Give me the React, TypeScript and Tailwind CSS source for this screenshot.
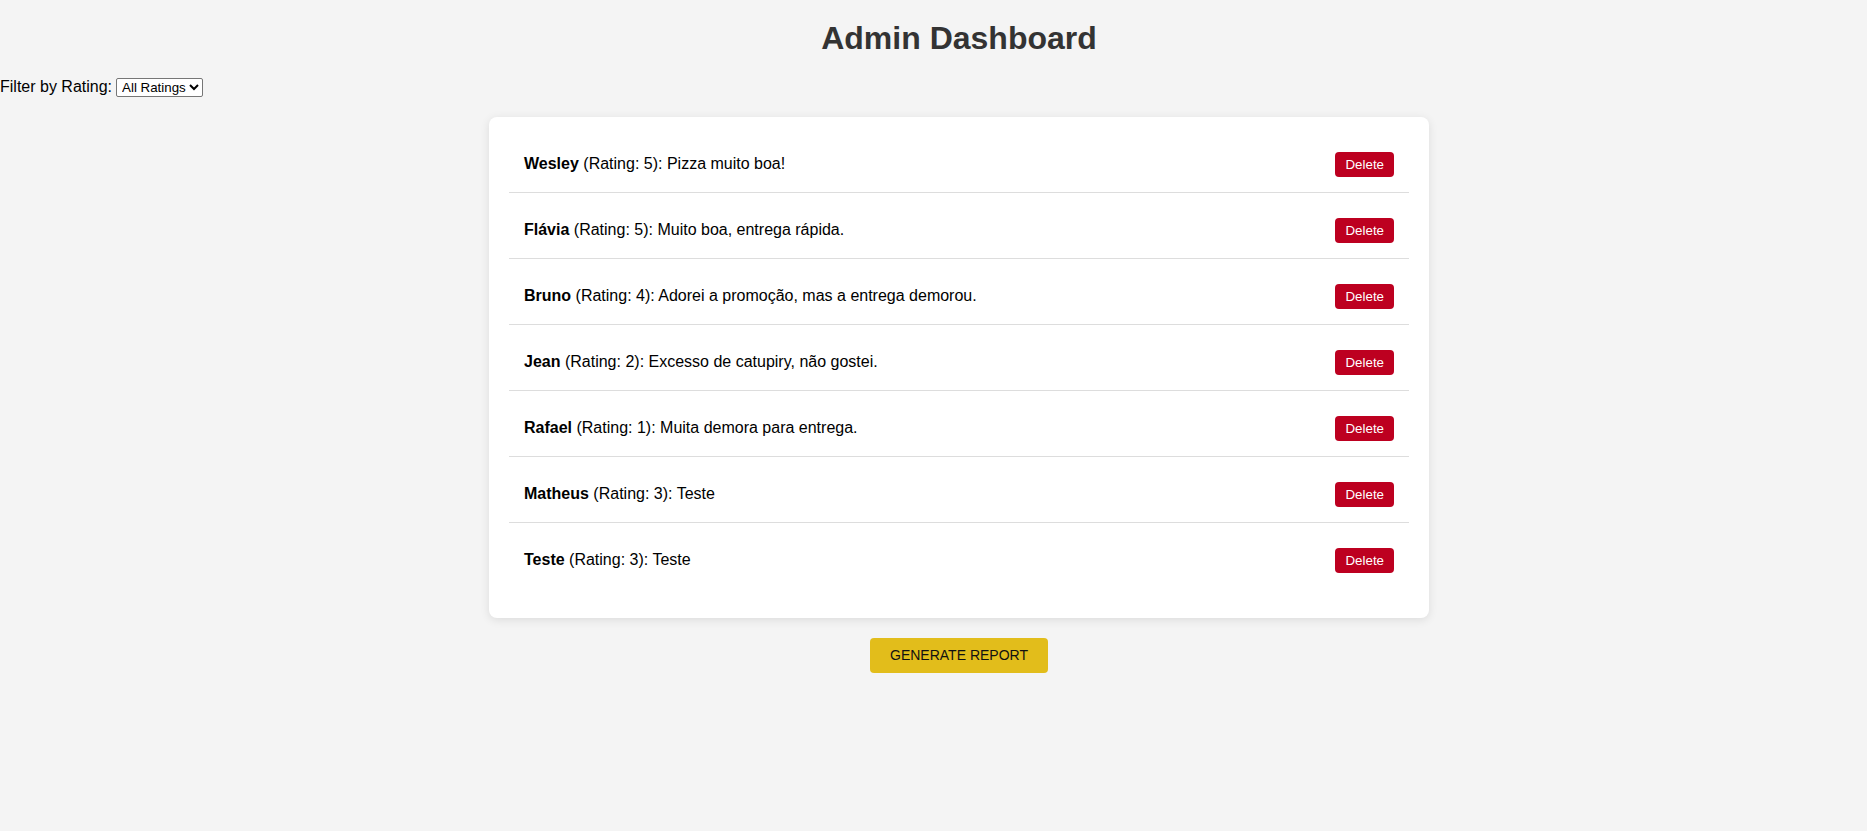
const REVIEWS = [
  { name: "Wesley", rating: 5, comment: "Pizza muito boa!" },
  { name: "Flávia", rating: 5, comment: "Muito boa, entrega rápida." },
  { name: "Bruno", rating: 4, comment: "Adorei a promoção, mas a entrega demorou." },
  { name: "Jean", rating: 2, comment: "Excesso de catupiry, não gostei." },
  { name: "Rafael", rating: 1, comment: "Muita demora para entrega." },
  { name: "Matheus", rating: 3, comment: "Teste" },
  { name: "Teste", rating: 3, comment: "Teste" },
];

export default function App() {
  return (
    <div className="min-h-screen bg-[#f4f4f4] font-['Liberation_Sans',Arial,sans-serif] text-black">
      <div className="pl-[51px] pt-[20px]">
        <h1 className="text-center text-[32px] leading-[36.8px] font-bold text-[#333]">Admin Dashboard</h1>
      </div>

      <div className="mt-[21px] flex h-[19px] items-center text-[16px]">
        <label htmlFor="rating">Filter by Rating:</label>
        <select
          id="rating"
          className="ml-[4px] h-[19px] rounded-[2px] border border-[#767676] bg-white pl-[1px] text-[13.33px] leading-none text-black"
        >
          <option>All Ratings</option>
          <option>5</option>
          <option>4</option>
          <option>3</option>
          <option>2</option>
          <option>1</option>
        </select>
      </div>

      <div className="flex flex-col items-center pl-[51px]">
        <ul className="mt-[20px] w-[940px] rounded-[8px] bg-white px-[20px] pt-[20px] pb-[20px] shadow-[0_2px_10px_rgba(0,0,0,0.1)]">
          {REVIEWS.map((r, i) => (
            <li
              key={r.name}
              className={
                "mb-[10px] flex items-center justify-between p-[15px] text-[16px] " +
                (i < REVIEWS.length - 1 ? "border-b border-[#ddd]" : "")
              }
            >
              <span>
                <strong className="font-bold">{r.name}</strong> (Rating: {r.rating}): {r.comment}
              </span>
              <button className="h-[25px] rounded-[4px] bg-[#bd0020] px-[10px] text-[13.33px] leading-none text-white">
                Delete
              </button>
            </li>
          ))}
        </ul>

        <button className="mt-[20px] h-[35px] rounded-[4px] bg-[#e2bd1b] px-[20px] text-[14px] text-[#111]">
          GENERATE REPORT
        </button>
      </div>
    </div>
  );
}
